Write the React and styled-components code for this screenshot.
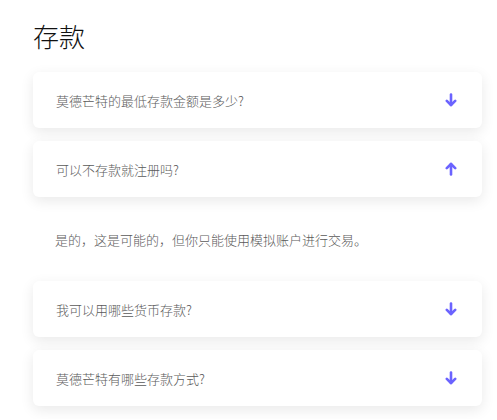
import React from "react";
import styled, { createGlobalStyle } from "styled-components";

const Global = createGlobalStyle`
  html, body { margin: 0; padding: 0; background: #fff; }
  body { font-family: "Noto Sans CJK SC", "Noto Sans", sans-serif; }
`;

const Page = styled.div`
  width: 449px;
  padding: 18px 15px 0 33px;
`;

const Title = styled.h2`
  margin: 0 0 18px;
  font-size: 26px;
  line-height: 36px;
  font-weight: 200;
  color: #111;
`;

const List = styled.div`
  display: flex;
  flex-direction: column;
`;

const Card = styled.div`
  display: flex;
  align-items: center;
  justify-content: space-between;
  height: 56px;
  box-sizing: border-box;
  padding: 0 25px 0 23px;
  background: #fff;
  border-radius: 6px;
  box-shadow: 0 4px 14px rgba(0, 0, 0, 0.09);
  margin-bottom: ${(p) => (p.$open ? "0" : "13px")};
`;

const Question = styled.span`
  font-size: 13px;
  font-weight: 300;
  color: #5a5a5a;
`;

const Answer = styled.p`
  margin: 0;
  height: 84px;
  display: flex;
  align-items: center;
  padding: 0 0 0 22px;
  font-size: 13px;
  font-weight: 300;
  color: #5a5a5a;
`;

const Arrow = ({ up }) => (
  <svg width="12" height="14" viewBox="0 0 12 14" style={{ transform: up ? "rotate(180deg)" : "none" }}>
    <g fill="none" stroke="#6b63ff" strokeWidth="2.6" strokeLinecap="round" strokeLinejoin="round">
      <line x1="6" y1="1.5" x2="6" y2="12" />
      <polyline points="1.8,7.8 6,12 10.2,7.8" />
    </g>
  </svg>
);

const items = [
  { q: "莫德芒特的最低存款金额是多少?" },
  { q: "可以不存款就注册吗?", open: true, a: "是的，这是可能的，但你只能使用模拟账户进行交易。" },
  { q: "我可以用哪些货币存款?" },
  { q: "莫德芒特有哪些存款方式?" },
];

export default function App() {
  return (
    <>
      <Global />
      <Page>
        <Title>存款</Title>
        <List>
          {items.map((it, i) => (
            <React.Fragment key={i}>
              <Card $open={it.open}>
                <Question>{it.q}</Question>
                <Arrow up={it.open} />
              </Card>
              {it.open && <Answer>{it.a}</Answer>}
            </React.Fragment>
          ))}
        </List>
      </Page>
    </>
  );
}
